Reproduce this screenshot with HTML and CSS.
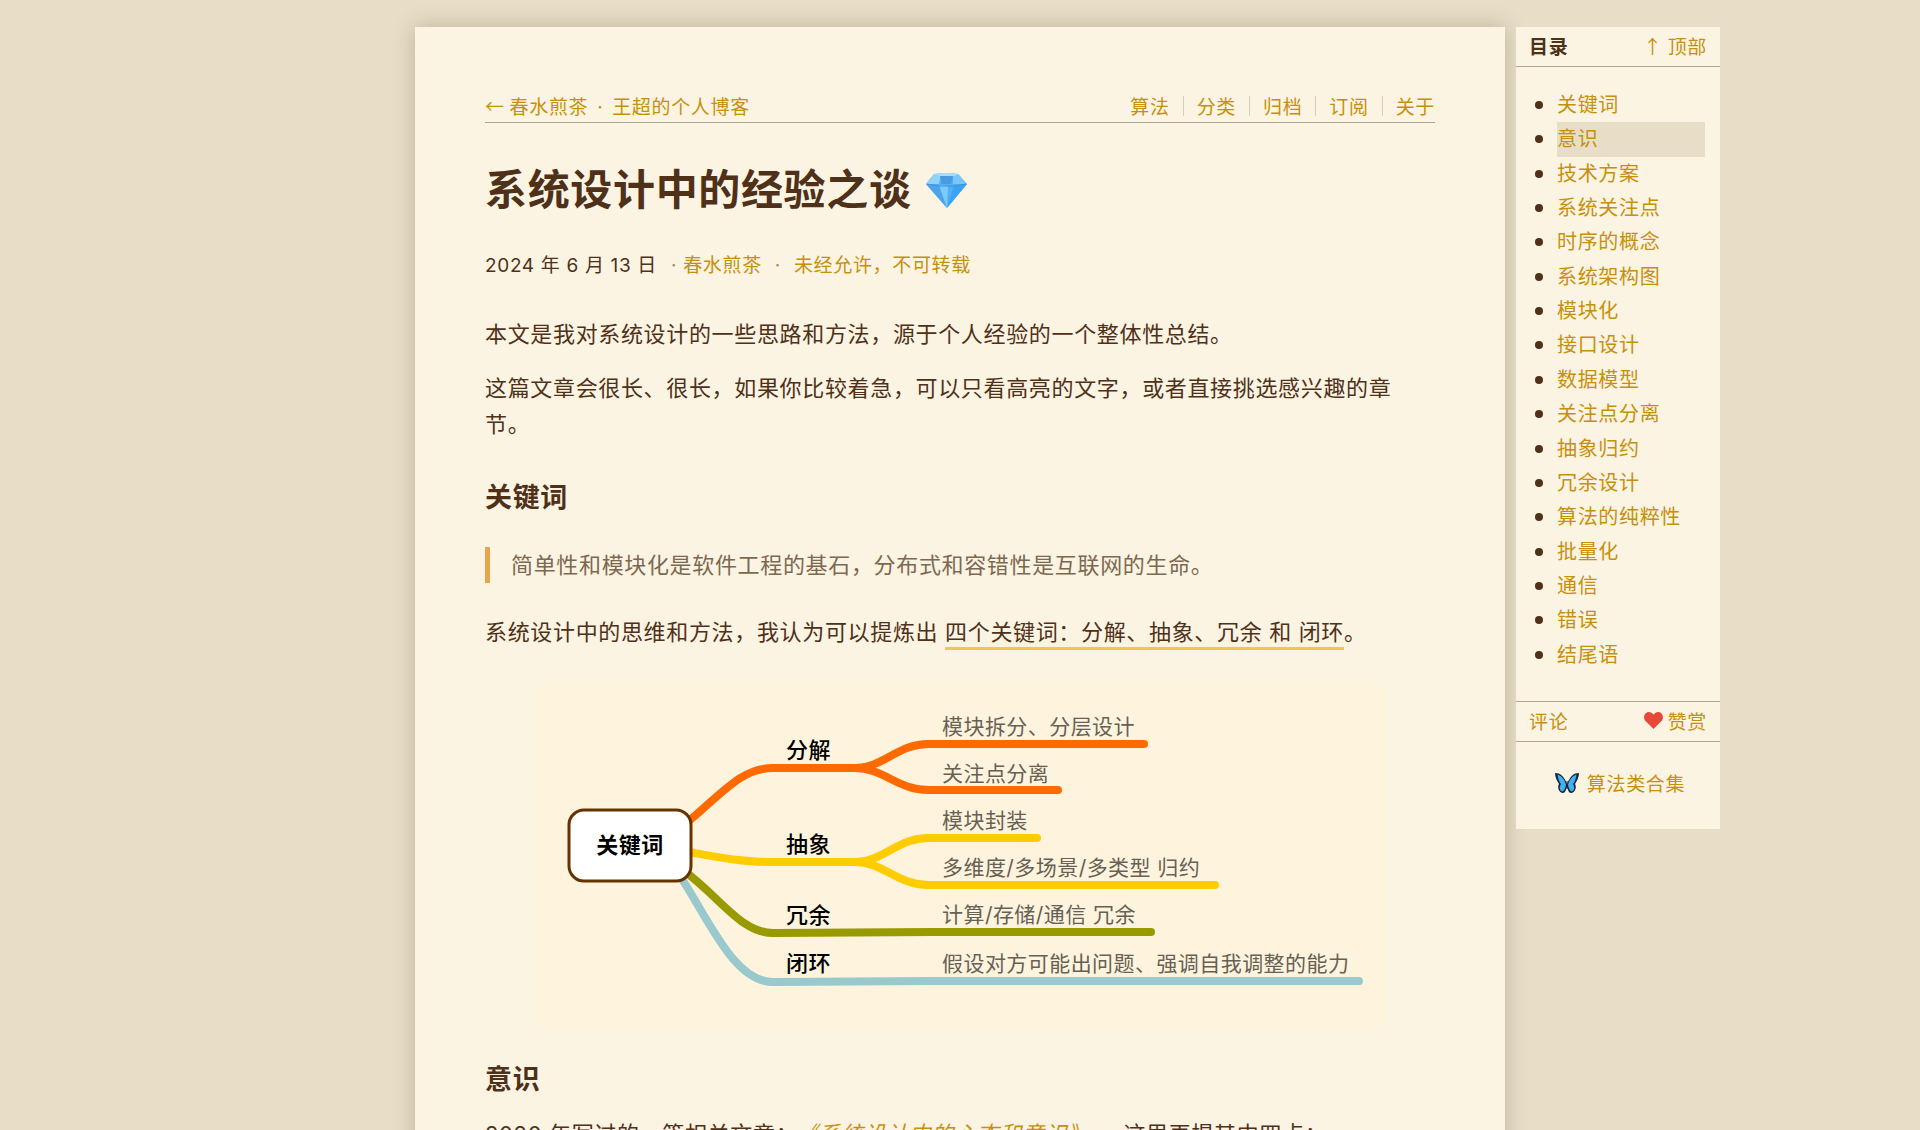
FILE: index.html
```html
<!DOCTYPE html>
<html lang="zh-CN">
<head>
    <title>系统设计中的经验之谈</title>
    <meta charset="UTF-8">
    <meta name="viewport" content="width=device-width, initial-scale=1.0">
    <link rel="stylesheet" href="styles.css">
</head>
<body>

<div class="page" id="top">
    <article class="post">
        <header class="site-header">
            <a href="/">← 春水煎茶 <span class="sep">·</span> 王超的个人博客</a>
            <nav class="site-nav">
                <a href="/algo">算法</a>
                <a href="/category">分类</a>
                <a href="/archive">归档</a>
                <a href="/feed">订阅</a>
                <a href="/about">关于</a>
            </nav>
        </header>

        <h1>系统设计中的经验之谈
            <svg class="gem" viewBox="0 0 41 36" aria-hidden="true">
                <path fill="#4fb0f5" d="M8 2Q20 0 32 2L41 12L21 36L0 12Z"/>
                <path fill="#8fd3fb" d="M8 2L0 12H13L15 2Z"/>
                <path fill="#4a9ce0" d="M14 4H27L25 12H16Z"/>
                <path fill="#79c6fb" d="M32 2L41 12H27L27 2Z"/>
                <path fill="#a9defc" d="M8 2Q20 0 32 2L28 4H14Z"/>
                <path fill="#4ba3ec" d="M0 12L21 36L13 13Z"/>
                <path fill="#7dcbfc" d="M13 13L21 36L22 14Z"/>
                <path fill="#3ba4f2" d="M28 13L21 36L41 12Z"/>
                <path fill="none" stroke="#4592da" d="M1 12L13 14H28L40 12"/>
            </svg>
        </h1>

        <div class="meta">
            <time datetime="2024-06-13">2024 年 6 月 13 日</time>
            <span class="dot">·</span>
            <a href="/">春水煎茶</a>
            <span class="dot wide">·</span>
            <a href="/copyright">未经允许，不可转载</a>
        </div>

        <p>本文是我对系统设计的一些思路和方法，源于个人经验的一个整体性总结。</p>
        <p>这篇文章会很长、很长，如果你比较着急，可以只看高亮的文字，或者直接挑选感兴趣的章节。</p>

        <h3 id="keywords">关键词</h3>
        <blockquote>简单性和模块化是软件工程的基石，分布式和容错性是互联网的生命。</blockquote>
        <p>系统设计中的思维和方法，我认为可以提炼出 <span class="highlight">四个关键词：分解、抽象、冗余 和 闭环</span>。</p>

        <svg class="mindmap" viewBox="0 0 855 342" role="img" aria-label="关键词">
            <!-- branches -->
            <g class="branch orange">
                <path d="M150 141C190 108 208 83 240 83H322C350 83 365 59 395 59H611"/>
                <path d="M322 83C350 83 365 105 395 105H525"/>
            </g>
            <g class="branch yellow">
                <path d="M150 166C185 172 205 177 240 177H322C350 177 365 153 395 153H504"/>
                <path d="M322 177C350 177 365 200 395 200H682"/>
            </g>
            <g class="branch olive">
                <path d="M150 185C188 213 208 248 240 248L400 247H618"/>
            </g>
            <g class="branch blue">
                <path d="M145 188C175 232 200 297 240 297L400 296H826"/>
            </g>

            <rect class="root" x="36" y="125" width="122" height="71" rx="15"/>
            <text class="root-label" x="97" y="168">关键词</text>

            <g class="label">
                <text x="253" y="73">分解</text>
                <text x="253" y="167">抽象</text>
                <text x="253" y="238">冗余</text>
                <text x="253" y="286">闭环</text>
            </g>
            <g class="sub-label">
                <text x="409" y="49">模块拆分、分层设计</text>
                <text x="409" y="96">关注点分离</text>
                <text x="409" y="143">模块封装</text>
                <text x="409" y="190">多维度/多场景/多类型 归约</text>
                <text x="409" y="237">计算/存储/通信 冗余</text>
                <text x="409" y="286">假设对方可能出问题、强调自我调整的能力</text>
            </g>
        </svg>

        <h3 id="awareness">意识</h3>
        <p>2020 年写过的一篇相关文章：<a href="/awareness"><em>《系统设计中的心态和意识》</em></a> ，这里再提其中四点：</p>
    </article>

    <aside class="toc">
        <div class="toc-bar">
            <strong>目录</strong>
            <a href="#top">↑ 顶部</a>
        </div>
        <ul>
            <li><a href="#keywords">关键词</a></li>
            <li class="active"><a href="#awareness">意识</a></li>
            <li><a href="#plan">技术方案</a></li>
            <li><a href="#focus">系统关注点</a></li>
            <li><a href="#timing">时序的概念</a></li>
            <li><a href="#architecture">系统架构图</a></li>
            <li><a href="#module">模块化</a></li>
            <li><a href="#interface">接口设计</a></li>
            <li><a href="#model">数据模型</a></li>
            <li><a href="#separation">关注点分离</a></li>
            <li><a href="#abstract">抽象归约</a></li>
            <li><a href="#redundancy">冗余设计</a></li>
            <li><a href="#pure">算法的纯粹性</a></li>
            <li><a href="#batch">批量化</a></li>
            <li><a href="#message">通信</a></li>
            <li><a href="#error">错误</a></li>
            <li><a href="#end">结尾语</a></li>
        </ul>
        <div class="toc-bar toc-foot">
            <a href="#comments">评论</a>
            <a class="with-icon" href="#donate">
                <svg class="heart" viewBox="0 0 19 17" aria-hidden="true">
                    <path fill="#e8483a" d="M9.500 17L1.500 9C-.6 6.600-.3 3 1.800 1.200C4-.6 7.600-.2 9.500 2.800C11.400-.2 15-.6 17.200 1.200C19.300 3 19.600 6.600 17.500 9Z"/>
                </svg>
                赞赏
            </a>
        </div>
        <div class="toc-extra">
            <a class="with-icon" href="/algo">
                <svg class="butterfly" viewBox="0 0 24 20" aria-hidden="true">
                    <path fill="#16233a" d="M0 0C5 0 9 3 12 11C15 3 19 0 24 0C24 4 22 8 20 11C22 14 20 20 16 20C14 20 13 17 12 14C11 17 10 20 8 20C4 20 2 14 4 11C2 8 0 4 0 0Z"/>
                    <path fill="#3fb0f2" d="M2.500 1.500C7 3 10 7 11 12C10 16 9 18 7.500 18.500C4.500 18 4 14 6 11C4 9 3 5 2.500 1.500Z"/>
                    <path fill="#3fb0f2" d="M21.500 1.500C17 3 14 7 13 12C14 16 15 18 16.500 18.500C19.500 18 20 14 18 11C20 9 21 5 21.500 1.500Z"/>
                    <path fill="none" stroke="#16233a" d="M12 8V16"/>
                </svg>
                算法类合集
            </a>
        </div>
    </aside>
</div>

</body>
</html>
```
FILE: styles.css
```css
/* Global styles */
body {
    margin: 0;
    background-color: #e8dec8;
    color: #4f3018;
    font-family: "Inter", "Noto Sans CJK SC", sans-serif;
    font-size: 22px;
    line-height: 36px;
    letter-spacing: 0.03em;
}

a {
    color: #c6900c;
    text-decoration: none;
}

a:hover {
    text-decoration: underline;
}

/* Centred article, contents list to its right */
.page {
    display: grid;
    grid-template-columns: minmax(0, 1fr) minmax(0, 1090px) minmax(204px, 1fr);
    column-gap: 11px;
    align-items: start;
    padding-top: 27px;
}

.post {
    grid-column: 2;
    padding: 66px 70px 60px;
    background-color: #fcf4e3;
    box-shadow: 0 0 20px rgba(90, 70, 40, 0.3);
}

/* Header */
.site-header {
    display: flex;
    justify-content: space-between;
    border-bottom: 1px solid #b3a58f;
    font-family: "Noto Sans CJK SC", sans-serif;
    font-size: 19px;
    line-height: 26px;
    padding-bottom: 1px;
}

.sep {
    margin: 0 4px;
    font-family: "Inter", sans-serif;
}

.site-nav {
    display: flex;
    align-items: center;
    padding-bottom: 2px;
}

.site-nav a {
    padding: 0 13px;
    border-right: 1px solid #d8cdb9;
    line-height: 20px;
}

.site-nav a:last-child {
    padding-right: 0;
    border-right: none;
}

/* Post */
h1 {
    display: flex;
    align-items: center;
    gap: 14px;
    margin: 39px 0 30px;
    font-size: 42px;
    line-height: 56px;
}

.gem {
    width: 41px;
    height: 36px;
}

.meta {
    display: flex;
    margin-bottom: 32px;
    font-size: 19px;
}

.meta time {
    margin-right: 14px;
}

.dot {
    margin-right: 6px;
    color: #a08c70;
}

.dot.wide {
    margin: 0 13px;
}

p {
    margin: 18px 0;
}

p em {
    margin: 0 4px 0 8px;
}

h3 {
    margin: 38px 0 18px;
    font-size: 27px;
    line-height: 36px;
}

blockquote {
    margin: 31px 0;
    padding-left: 21px;
    border-left: 5px solid #e8a44c;
    color: #7d6850;
}

.highlight {
    padding-bottom: 2px;
    border-bottom: 3px solid #ebcb4b;
}

/* Mind map */
.mindmap {
    display: block;
    width: 90%;
    margin: 35px auto;
    background-color: #fef4dd;
    letter-spacing: 0.02em;
}

.mindmap + h3 {
    margin-top: 35px;
}

.branch {
    fill: none;
    stroke-width: 8;
    stroke-linecap: round;
}

.orange {
    stroke: #ff6a00;
}

.yellow {
    stroke: #ffcc00;
}

.olive {
    stroke: #999900;
}

.blue {
    stroke: #99c9cc;
}

.root {
    fill: #ffffff;
    stroke: #663300;
    stroke-width: 3;
}

.root-label {
    fill: #000000;
    font-weight: bold;
    text-anchor: middle;
}

.label {
    fill: #000000;
    font-weight: 500;
}

.sub-label {
    fill: #666055;
    font-size: 21px;
}

/* Contents list */
.toc {
    position: sticky;
    top: 27px;
    width: 204px;
    background-color: #fcf4e3;
    font-family: "Noto Sans CJK SC", sans-serif;
}

.toc-bar {
    display: flex;
    justify-content: space-between;
    padding: 0 13px 2px;
    border-bottom: 1px solid #b3a58f;
    font-size: 19px;
    line-height: 37px;
}

.toc-foot {
    border-top: 1px solid #b3a58f;
}

.toc ul {
    display: grid;
    grid-auto-rows: 1fr;
    min-height: 584px;
    margin: 0;
    padding: 21px 15px 29px 41px;
    font-size: 20px;
    line-height: 32px;
}

.active {
    background-color: #e8dec8;
}

.with-icon {
    display: flex;
    align-items: center;
    gap: 5px;
}

.heart {
    width: 19px;
    height: 17px;
}

.butterfly {
    width: 24px;
    height: 20px;
    margin-right: 3px;
}

.toc-extra {
    display: flex;
    justify-content: center;
    padding: 24px 0 29px 4px;
    font-size: 19px;
    line-height: 34px;
}
```
